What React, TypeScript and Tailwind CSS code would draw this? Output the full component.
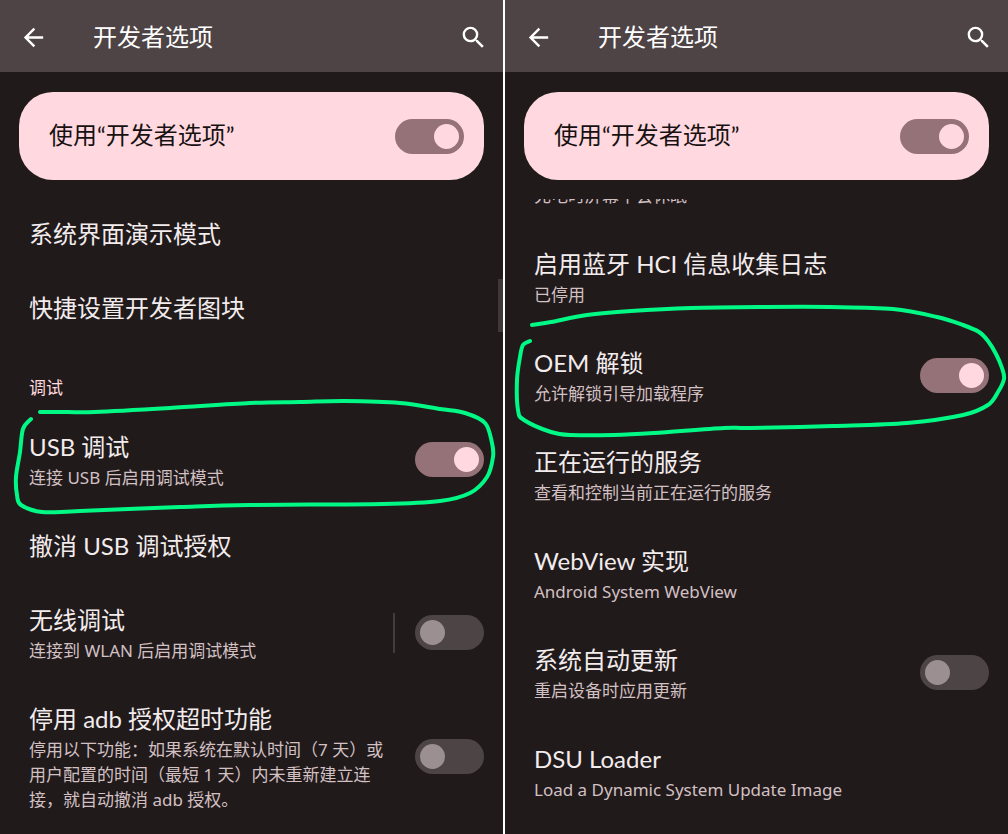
import type { ReactNode } from "react";
import { MdArrowBack, MdSearch } from "react-icons/md";

type Point = [number, number];

/* Turns hand-drawn points into a smooth open curve. */
function smoothPath(points: Point[]): string {
  const at = (i: number) => points[Math.max(0, Math.min(points.length - 1, i))];
  let d = `M${points[0][0]} ${points[0][1]}`;
  for (let i = 0; i < points.length - 1; i++) {
    const [p0, p1, p2, p3] = [at(i - 1), at(i), at(i + 1), at(i + 2)];
    d += `C${p1[0] + (p2[0] - p0[0]) / 6} ${p1[1] + (p2[1] - p0[1]) / 6} ${p2[0] - (p3[0] - p1[0]) / 6} ${p2[1] - (p3[1] - p1[1]) / 6} ${p2[0]} ${p2[1]}`;
  }
  return d;
}

const usbCircle: Point[] = [
  [40, 412], [68, 412], [95, 412], [170, 408], [250, 403], [300, 402], [345, 401], [400, 403], [440, 409],
  [465, 413], [485, 423], [492, 443], [493, 457], [487, 477], [470, 493], [440, 501], [383, 504],
  [250, 505], [180, 507], [80, 511], [42, 512], [21, 505], [17, 495], [16, 477], [20, 452], [23, 429], [31, 419],
];

const oemCircle: Point[] = [
  [532, 325], [551, 322], [587, 315], [631, 311], [691, 308], [764, 307], [830, 307], [893, 309],
  [937, 317], [963, 325], [979, 332], [988, 341], [996, 354], [1002, 368], [1004, 379], [998, 392], [988, 405], [963, 415],
  [907, 423], [833, 426], [750, 428], [724, 428], [654, 433], [614, 435], [571, 435], [551, 432],
  [524, 420], [518, 410], [517, 380], [520, 357], [523, 345], [530, 341],
];

function Marker({ points, viewBox }: { points: Point[]; viewBox: string }) {
  return (
    <svg
      className="pointer-events-none absolute inset-0 z-10 h-full w-full overflow-visible"
      viewBox={viewBox}
      preserveAspectRatio="none"
      aria-hidden="true"
    >
      <path d={smoothPath(points)} fill="none" stroke="#00f985" strokeWidth="4" strokeLinecap="round" strokeLinejoin="round" />
    </svg>
  );
}

function Toggle({ id, on = false }: { id: string; on?: boolean }) {
  return (
    <span className="relative block h-[35px] w-[69px] shrink-0">
      <input
        id={id}
        type="checkbox"
        role="switch"
        defaultChecked={on}
        className="peer block h-full w-full cursor-pointer appearance-none rounded-full bg-[#4d4445] checked:bg-[#957178]"
      />
      <span className="pointer-events-none absolute top-[5px] left-[5px] size-[25px] rounded-full bg-[#9b8f91] peer-checked:left-[39px] peer-checked:bg-[#ffd9df]" />
    </span>
  );
}

function Summary({ children }: { children: ReactNode }) {
  return (
    <p className="font-['Noto_Sans','Noto_Sans_CJK_SC',sans-serif] text-[17px] leading-[25px] text-[#d3c0c3]">{children}</p>
  );
}

interface RowProps {
  title: string;
  summary?: string;
  id?: string;
  on?: boolean;
  split?: boolean;
  children?: ReactNode;
}

function Row({ title, summary, id, on, split, children }: RowProps) {
  return (
    <li className="relative flex items-center py-[19px] pr-[19px] pl-[29px]">
      <div className="min-w-0 flex-1">
        {id ? (
          <label htmlFor={id} className="block text-2xl leading-9 text-[#f3eced]">{title}</label>
        ) : (
          <h3 className="text-2xl leading-9 text-[#f3eced]">{title}</h3>
        )}
        {summary && <Summary>{summary}</Summary>}
      </div>
      {id && (
        <div className={`flex items-center ${split ? "gap-5" : "pl-6"}`}>
          {split && <span className="h-10 w-0.5 bg-[#433b3c]" />}
          <Toggle id={id} on={on} />
        </div>
      )}
      {children}
    </li>
  );
}

function Screen({ name, children }: { name: string; children: ReactNode }) {
  return (
    <section className="relative flex min-w-0 flex-1 flex-col bg-[#201a1b]">
      <header className="flex h-[72px] items-center bg-[#4e4445] pt-0.5 pr-[15px] pl-[19px] text-white">
        <button type="button" aria-label="返回">
          <MdArrowBack size={29} />
        </button>
        <h1 className="ml-[45px] flex-1 text-2xl leading-9">开发者选项</h1>
        <button type="button" aria-label="搜索">
          <MdSearch size={29} />
        </button>
      </header>
      <div className="mx-[19px] mt-5 flex h-[88px] items-center justify-between rounded-[34px] bg-[#ffd9df] pr-5 pl-[30px]">
        <label htmlFor={`${name}-main`} className="pb-0.5 text-2xl leading-9 text-[#171112]">使用“开发者选项”</label>
        <Toggle id={`${name}-main`} on />
      </div>
      <div className="mt-[19px] flex-1 overflow-hidden">{children}</div>
    </section>
  );
}

export default function App() {
  return (
    <main
      lang="zh-CN"
      className="flex min-h-screen gap-0.5 overflow-hidden bg-white font-['Lato','Noto_Sans_CJK_SC',sans-serif]"
    >
      <Screen name="debug">
        <ul className="-mt-0.5">
          <Row title="系统界面演示模式" />
          <Row title="快捷设置开发者图块" />
        </ul>
        <h2 className="pt-[30px] pb-2.5 pl-[29px] text-[17px] leading-[25px] text-[#ffd9df]">调试</h2>
        <ul>
          <Row title="USB 调试" summary="连接 USB 后启用调试模式" id="usb" on>
            <Marker points={usbCircle} viewBox="0 410 503 99" />
          </Row>
          <Row title="撤消 USB 调试授权" />
          <Row title="无线调试" summary="连接到 WLAN 后启用调试模式" id="wireless" split />
          <Row
            title="停用 adb 授权超时功能"
            summary="停用以下功能：如果系统在默认时间（7 天）或用户配置的时间（最短 1 天）内未重新建立连接，就自动撤消 adb 授权。"
            id="adb"
          />
        </ul>
        <span className="absolute top-[279px] right-0 h-[53px] w-[5px] bg-[#3f3839]" />
      </Screen>
      <Screen name="system">
        <ul>
          <li className="flex h-7 flex-col justify-end overflow-hidden pb-[19px] pl-[29px]">
            <Summary>充电时屏幕不会休眠</Summary>
          </li>
          <Row title="启用蓝牙 HCI 信息收集日志" summary="已停用" />
          <Row title="OEM 解锁" summary="允许解锁引导加载程序" id="oem" on>
            <Marker points={oemCircle} viewBox="505 326 503 99" />
          </Row>
          <Row title="正在运行的服务" summary="查看和控制当前正在运行的服务" />
          <Row title="WebView 实现" summary="Android System WebView" />
          <Row title="系统自动更新" summary="重启设备时应用更新" id="update" />
          <Row title="DSU Loader" summary="Load a Dynamic System Update Image" />
        </ul>
      </Screen>
    </main>
  );
}
